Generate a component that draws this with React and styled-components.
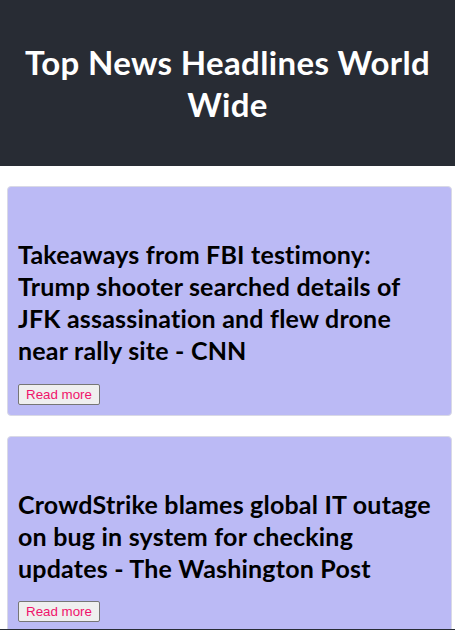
import React from "react"
import styled, { createGlobalStyle } from "styled-components"

const articles = [
  { id: 1, title: "Takeaways from FBI testimony: Trump shooter searched details of JFK assassination and flew drone near rally site - CNN" },
  { id: 2, title: "CrowdStrike blames global IT outage on bug in system for checking updates - The Washington Post" },
]

const GlobalStyle = createGlobalStyle`
  html, body {
    margin: 0;
    background: #ffffff;
    overflow: hidden;
  }
  body {
    font-family: Lato, "Open Sans", sans-serif;
  }
`

const Page = styled.div`
  display: flex;
  flex-direction: column;
  height: 630px;
  border-bottom: 1px solid #282c34;
  box-sizing: border-box;
  overflow: hidden;
`

const Header = styled.header`
  background-color: #282c34;
  padding: 19.5px 16px;
  text-align: center;
`

const Title = styled.h1`
  margin: 21px 0;
  color: #ffffff;
  font-size: 33px;
  line-height: 42.6px;
  letter-spacing: 0.35px;
  font-weight: 700;
`

const List = styled.main`
  display: flex;
  flex-direction: column;
  gap: 20px;
  padding: 20px 3px 0 7px;
`

const Card = styled.div`
  display: flex;
  flex-direction: column;
  align-items: flex-start;
  background-color: #bbbaf5;
  border: 1px solid #d9d9e6;
  border-radius: 4px;
  padding: 10px;
`

const Headline = styled.h2`
  margin: 41px 0 17.5px;
  color: #000000;
  font-size: 25px;
  line-height: 32px;
  letter-spacing: 0.2px;
  font-weight: 700;
`

const ReadMore = styled.button`
  font-family: "Liberation Sans", Arial, sans-serif;
  font-size: 13.33px;
  color: #f0136b;
  background: #efefef;
  border: 1px solid #767676;
  border-radius: 2px;
  padding: 2px 7px;
  cursor: pointer;
`

export default function App() {
  return (
    <Page>
      <GlobalStyle />
      <Header>
        <Title>Top News Headlines World Wide</Title>
      </Header>
      <List>
        {articles.map((item) => (
          <Card key={item.id}>
            <Headline>{item.title}</Headline>
            <ReadMore>Read more</ReadMore>
          </Card>
        ))}
      </List>
    </Page>
  )
}
